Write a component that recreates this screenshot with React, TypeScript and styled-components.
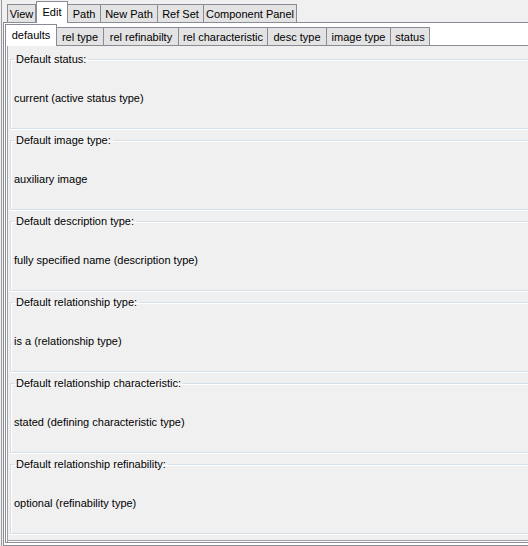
import React from 'react';
import styled, { createGlobalStyle } from 'styled-components';

const GlobalStyle = createGlobalStyle`
  html, body {
    margin: 0;
    padding: 0;
    background: #f0f0f0;
  }
  body {
    font-family: 'Liberation Sans', Arial, sans-serif;
    font-size: 11px;
    color: #000;
  }
`;

export const Screen = styled.div`
  width: 528px;
  height: 546px;
  overflow: hidden;
  background: #f0f0f0;
  display: flex;
`;

export const Backdrop = styled.div`
  margin-left: 1px;
  border-left: 1px solid #9a9a9a;
  padding-left: 1px;
  display: flex;
  flex-direction: column;
  height: 546px;
`;

export const TabPane = styled.div<{ $inner?: boolean }>`
  display: flex;
  flex-direction: column;
  flex: 1;
  width: ${(p) => (p.$inner ? '540px' : '545px')};
`;

export const TabStrip = styled.div<{ $inset: number }>`
  display: flex;
  align-items: flex-end;
  height: 22px;
  padding-left: ${(p) => p.$inset}px;
  flex-shrink: 0;
`;

export const Tab = styled.div<{ $w: number; $active?: boolean }>`
  box-sizing: border-box;
  width: ${(p) => p.$w}px;
  height: ${(p) => (p.$active ? '22px' : '18px')};
  margin-bottom: ${(p) => (p.$active ? '-1px' : '0')};
  position: relative;
  z-index: ${(p) => (p.$active ? 2 : 1)};
  display: flex;
  align-items: center;
  justify-content: center;
  padding-top: ${(p) => (p.$active ? '0' : '1px')};
  border: 1px solid #898c95;
  border-bottom: none;
  border-left-width: ${(p) => (p.$active ? '1px' : '0')};
  background: ${(p) => (p.$active ? '#ffffff' : '#e3e3e3')};
  white-space: nowrap;
  line-height: 13px;

  &:first-child {
    border-left-width: 1px;
  }
`;

export const OuterBody = styled.div`
  flex: 1;
  border: 1px solid #898c95;
  border-right: none;
  background: #ffffff;
  padding: 0 0 2px 1px;
  display: flex;
  flex-direction: column;
`;

export const InnerBody = styled.div`
  flex: 1;
  border: 1px solid #898c95;
  border-right: none;
  box-shadow: inset 1px 0 0 #ffffff, inset 2px 0 0 #a0a0a0,
    inset 0 -1px 0 #ffffff, inset 0 -2px 0 #a0a0a0;
  background: #f0f0f0;
  padding: 7px 0 0 4px;
  display: flex;
  flex-direction: column;
  gap: 5px;
`;

export const Section = styled.fieldset`
  margin: 0;
  padding: 0 3px 23px;
  border: 1px solid #d5dfe5;
  border-right: none;
  box-shadow: inset 1px 1px 0 #ffffff, 0 1px 0 #ffffff;
  min-width: 0;
  flex-shrink: 0;
`;

export const Title = styled.legend`
  padding: 0 2px;
  height: 13px;
  line-height: 13px;
  font-size: 11px;
`;

export const Value = styled.div`
  margin-top: 26px;
  height: 13px;
  line-height: 13px;
`;

const outerTabs: [string, number][] = [
  ['View', 29],
  ['Edit', 32],
  ['Path', 33],
  ['New Path', 57],
  ['Ref Set', 46],
  ['Component Panel', 93],
];

const innerTabs: [string, number][] = [
  ['defaults', 52],
  ['rel type', 47],
  ['rel refinabilty', 75],
  ['rel characteristic', 89],
  ['desc type', 59],
  ['image type', 64],
  ['status', 39],
];

const sections: [string, string][] = [
  ['Default status:', 'current (active status type)'],
  ['Default image type:', 'auxiliary image'],
  ['Default description type:', 'fully specified name (description type)'],
  ['Default relationship type:', 'is a (relationship type)'],
  ['Default relationship characteristic:', 'stated (defining characteristic type)'],
  ['Default relationship refinability:', 'optional (refinability type)'],
];

export default function App() {
  return (
    <>
      <GlobalStyle />
      <Screen>
        <Backdrop>
          <TabPane>
            <TabStrip $inset={4}>
              {outerTabs.map(([label, w]) => (
                <Tab key={label} $w={w} $active={label === 'Edit'}>
                  {label}
                </Tab>
              ))}
            </TabStrip>
            <OuterBody>
              <TabPane $inner>
                <TabStrip $inset={0}>
                  {innerTabs.map(([label, w]) => (
                    <Tab key={label} $w={w} $active={label === 'defaults'}>
                      {label}
                    </Tab>
                  ))}
                </TabStrip>
                <InnerBody>
                  {sections.map(([title, value]) => (
                    <Section key={title}>
                      <Title>{title}</Title>
                      <Value>{value}</Value>
                    </Section>
                  ))}
                </InnerBody>
              </TabPane>
            </OuterBody>
          </TabPane>
        </Backdrop>
      </Screen>
    </>
  );
}
